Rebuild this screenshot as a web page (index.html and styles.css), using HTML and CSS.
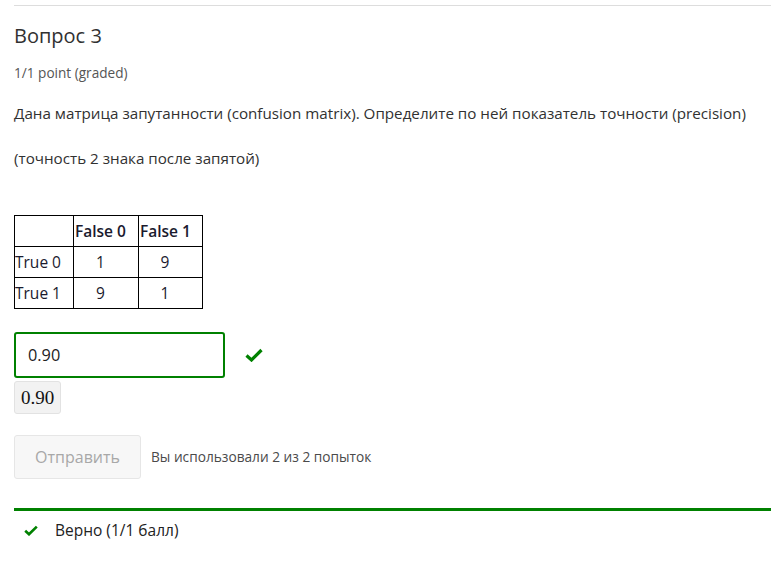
FILE: index.html
```html
<!DOCTYPE html>
<html lang="ru">
<head>
<meta charset="utf-8">
<link rel="stylesheet" href="styles.css">
</head>
<body>
<div class="problem">
  <h3 class="title">Вопрос 3</h3>
  <div class="points">1/1 point (graded)</div>
  <p class="text">Дана матрица запутанности (confusion matrix). Определите по ней показатель точности (precision)</p>
  <p class="text">(точность 2 знака после запятой)</p>
  <table class="matrix">
    <tr><th class="c1"></th><th class="c2">False 0</th><th class="c3">False 1</th></tr>
    <tr><td class="rowh">True 0</td><td class="num">1</td><td class="num">9</td></tr>
    <tr><td class="rowh">True 1</td><td class="num">9</td><td class="num">1</td></tr>
  </table>
  <div class="answer-row">
    <div class="input">0.90</div>
    <svg class="check" width="18" height="14" viewBox="0 0 18 14"><path d="M1.5 7.5 L6.5 12 L16.5 2" fill="none" stroke="#008100" stroke-width="3.2"/></svg>
  </div>
  <div class="preview">0.90</div>
  <div class="actions">
    <div class="submit">Отправить</div>
    <span class="attempts">Вы использовали 2 из 2 попыток</span>
  </div>
  <div class="result">
    <svg class="check small" width="14" height="11" viewBox="0 0 14 11"><path d="M1.2 5.8 L5 9.3 L12.8 1.6" fill="none" stroke="#008100" stroke-width="2.6"/></svg>
    <span class="result-text">Верно (1/1 балл)</span>
  </div>
</div>
</body>
</html>
```
FILE: styles.css
```css
html, body {
  margin: 0;
  padding: 0;
  background: #fff;
}
body {
  font-family: "Open Sans", "Noto Sans", sans-serif;
  color: #313131;
}
.problem {
  margin-left: 14px;
  margin-top: 5px;
  border-top: 1px solid #ddd;
  padding-top: 16px;
}
.title {
  margin: 0;
  font-size: 20px;
  font-weight: 400;
  line-height: 28px;
  color: #313131;
}
.points {
  margin-top: 14px;
  font-size: 13.6px;
  line-height: 18px;
  color: #555;
}
.text {
  margin: 19px 0 0;
  font-size: 15.2px;
  line-height: 24px;
}
.text + .text {
  margin-top: 21px;
}
.matrix {
  margin-top: 45px;
  border-collapse: collapse;
  font-size: 15.5px;
  color: #1a1a2e;
}
.matrix th, .matrix td {
  border: 1px solid #000;
  height: 30px;
  padding: 0;
  text-align: center;
}
.matrix th {
  font-weight: 600;
  text-align: left;
  text-indent: 1px;
}
.matrix .num {
  text-indent: -11px;
}
.matrix .c1 { width: 58px; }
.matrix .c2 { width: 64px; }
.matrix .c3 { width: 63px; }
.matrix .rowh {
  text-align: left;
}
.answer-row {
  margin-top: 23px;
  display: flex;
  align-items: center;
}
.input {
  box-sizing: border-box;
  width: 211px;
  height: 46px;
  border: 2px solid #008100;
  border-radius: 3px;
  padding-left: 12px;
  font-size: 16.3px;
  line-height: 42px;
  color: #222;
}
.check {
  margin-left: 20px;
  display: block;
}
.preview {
  width: fit-content;
  margin-top: 3px;
  box-sizing: border-box;
  height: 33px;
  padding: 0 6px;
  background: #f2f2f2;
  border: 1px solid #e2e2e2;
  border-radius: 3px;
  font-family: "Liberation Serif", serif;
  font-size: 19px;
  line-height: 31px;
  color: #111;
}
.actions {
  margin-top: 21px;
  display: flex;
  align-items: center;
}
.submit {
  box-sizing: border-box;
  width: 127px;
  height: 44px;
  background: #f7f7f7;
  border: 1px solid #e6e6e6;
  border-radius: 3px;
  text-align: center;
  font-size: 16px;
  line-height: 42px;
  color: #a8a8a8;
}
.attempts {
  margin-left: 10px;
  font-size: 13.7px;
  color: #4a4a4a;
  margin-bottom: 2px;
}
.result {
  margin-top: 29px;
  border-top: 3px solid #008100;
  display: flex;
  align-items: center;
  padding-top: 9px;
  padding-left: 10px;
}
.check.small {
  margin-left: 0;
}
.result-text {
  margin-left: 17px;
  font-size: 15.5px;
  line-height: 20px;
  color: #222;
}
```
